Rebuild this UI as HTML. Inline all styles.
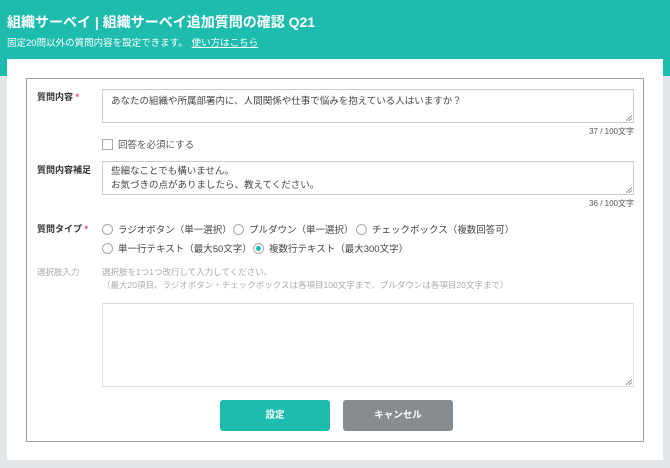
<!DOCTYPE html>
<html><head><meta charset="utf-8"><style>
*{box-sizing:border-box;margin:0;padding:0}
body{width:670px;height:468px;overflow:hidden;background:#e4e7ea;font-family:"Liberation Sans","Noto Sans CJK JP",sans-serif;position:relative;color:#333}
.hd{position:absolute;left:0;top:0;width:670px;height:76px;background:#1dbcae}
.t1{position:absolute;left:7px;top:12px;color:#fff;font-size:14px;font-weight:bold;white-space:nowrap}
.t2{position:absolute;left:7px;top:35px;color:#fff;font-size:9.5px;white-space:nowrap}
.t2 u{margin-left:4px}
.panel{position:absolute;left:7px;top:59px;width:656px;height:401px;background:#fff}
.box{position:absolute;left:26px;top:78px;width:618px;height:364px;border:1px solid #a0a0a0}
.a{position:absolute;white-space:nowrap;font-size:9.5px}
.lb{font-weight:bold;font-size:9px;color:#333}
.req{color:#e0457b}
.ta{position:absolute;border:1px solid #ccc;background:#fff;font-size:9.5px;padding:5px 8px;line-height:14px;color:#444}
.rs{position:absolute;right:1px;bottom:1px;width:6px;height:6px;background:linear-gradient(135deg,transparent 45%,#999 45%,#999 55%,transparent 55%,transparent 70%,#999 70%,#999 80%,transparent 80%)}
.cnt{font-size:8px;color:#555}
.rd{display:inline-block;width:11px;height:11px;border:1px solid #aaa;border-radius:50%;vertical-align:-2px;margin-right:5px;position:relative}
.rd.on::after{content:"";position:absolute;left:2px;top:2px;width:5px;height:5px;border-radius:50%;background:#1dbcae}
.g{color:#aaa;font-size:8.5px}
.btn{position:absolute;top:400px;height:31px;width:110px;border-radius:3px;color:#fff;font-weight:bold;font-size:9.5px;text-align:center;line-height:31px}
</style></head><body>
<div class="hd"></div>
<div class="t1">組織サーベイ | 組織サーベイ追加質問の確認 Q21</div>
<div class="t2">固定20問以外の質問内容を設定できます。<u>使い方はこちら</u></div>
<div class="panel"></div>
<div class="box"></div>
<div class="a lb" style="left:37px;top:90px">質問内容<span class="req"> *</span></div>
<div class="ta" style="left:102px;top:89px;width:532px;height:34px">あなたの組織や所属部署内に、人間関係や仕事で悩みを抱えている人はいますか？<div class="rs"></div></div>
<div class="a cnt" style="right:36px;top:126px">37 / 100文字</div>
<div class="a" style="left:102px;top:137px"><span style="display:inline-block;width:11px;height:11px;border:1px solid #aaa;vertical-align:-2px;margin-right:5px"></span><span style="color:#555">回答を必須にする</span></div>
<div class="a lb" style="left:37px;top:163px">質問内容補足</div>
<div class="ta" style="left:102px;top:161px;width:532px;height:34px;padding-top:3px">些細なことでも構いません。<br>お気づきの点がありましたら、教えてください。<div class="rs"></div></div>
<div class="a cnt" style="right:36px;top:198px">36 / 100文字</div>
<div class="a lb" style="left:37px;top:222px">質問タイプ<span class="req"> *</span></div>
<div class="a" style="left:102px;top:222px;color:#444"><span class="rd"></span>ラジオボタン（単一選択）</div>
<div class="a" style="left:233px;top:222px;color:#444"><span class="rd"></span>プルダウン（単一選択）</div>
<div class="a" style="left:356px;top:222px;color:#444"><span class="rd"></span>チェックボックス（複数回答可）</div>
<div class="a" style="left:102px;top:241px;color:#444"><span class="rd"></span>単一行テキスト（最大50文字）</div>
<div class="a" style="left:253px;top:241px;color:#444"><span class="rd on"></span>複数行テキスト（最大300文字）</div>
<div class="a g" style="left:37px;top:266px">選択肢入力</div>
<div class="a g" style="left:102px;top:266px">選択肢を1つ1つ改行して入力してください。</div>
<div class="a g" style="left:102px;top:279px">（最大20項目、ラジオボタン・チェックボックスは各項目100文字まで、プルダウンは各項目20文字まで）</div>
<div class="ta" style="left:102px;top:303px;width:532px;height:84px;border-color:#ddd"><div class="rs"></div></div>
<div class="btn" style="left:220px;background:#1dbcae">設定</div>
<div class="btn" style="left:343px;background:#878c91">キャンセル</div>
</body></html>
